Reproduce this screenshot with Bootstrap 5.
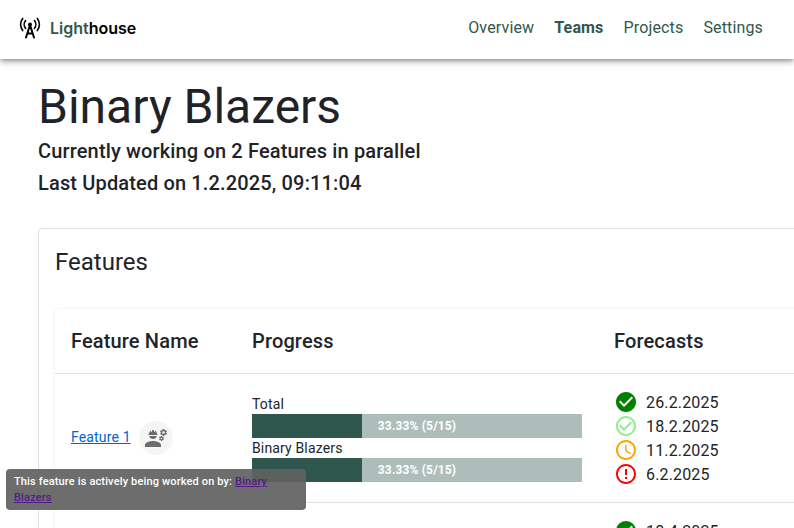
<!DOCTYPE html>
<html lang="en">
<head>
<meta charset="utf-8">
<title>Lighthouse</title>
<link href="https://cdn.jsdelivr.net/npm/bootstrap@5.3.0/dist/css/bootstrap.min.css" rel="stylesheet">
<style>
html, body { overflow: hidden; height: 100%; }
body { font-family: Roboto, sans-serif; color: #1f2328; background: #fff; position: relative; }
.lh-nav { height: 59px; padding: 0 31px 4px 19px; box-shadow: 0 2px 4px -1px rgba(0,0,0,.3), 0 4px 5px rgba(0,0,0,.14), 0 1px 10px rgba(0,0,0,.12); background: #fff; }
.lh-brand { font-family: Inter, sans-serif; font-weight: 600; font-size: 16px; color: #000; padding: 0; margin: 0; gap: 9px; }
.lh-brand:hover { color: #000; }
.lh-brand em { font-style: normal; color: #30574e; }
.lh-link { font-size: 16px; letter-spacing: .15px; color: #30574e; padding: 0 !important; margin-left: 20px; line-height: 24px; }
.lh-link.lh-active { font-weight: 700; color: #30574e; }
.lh-main { padding: 20px 0 0 38px; width: 1400px; }
.lh-title { font-size: 48px; font-weight: 400; line-height: 56px; margin: 0; }
.lh-sub { font-size: 20px; font-weight: 500; letter-spacing: .15px; line-height: 32px; margin: 0; }
.lh-card { margin-top: 29px; width: 1100px; border-color: #e0e0e0; border-radius: 4px; padding: 17px 16px 16px; }
.lh-card-title { font-size: 24px; font-weight: 400; line-height: 32px; margin: 0 0 31px; }
.lh-box { border-radius: 4px; box-shadow: 0 0 3px rgba(0,0,0,.1); }
.lh-table { table-layout: fixed; width: 100%; margin: 0; }
.lh-table th, .lh-table td { padding: 16px; border-bottom: 1px solid #e0e0e0; vertical-align: middle; }
.lh-table th { font-size: 20px; font-weight: 500; letter-spacing: .15px; line-height: 32px; }
.lh-c1 { width: 181px; }
.lh-c2 { width: 362px; }
.lh-flink { font-size: 14px; letter-spacing: .15px; color: #0066cc; margin-bottom: 2px; }
.lh-circle { width: 34px; height: 34px; background: #f5f5f5; border-radius: 50%; }
.lh-label { font-size: 14px; line-height: 20px; letter-spacing: .15px; }
.lh-label-low { margin-top: 4px; }
.lh-bar { height: 24px; width: 330px; background: #aebdb9; }
.lh-fill { width: 33.33%; background: #30574e; }
.lh-pct { font-size: 12px; font-weight: 700; letter-spacing: .15px; color: #fff; inset: 0; }
.lh-date { height: 24px; font-size: 16px; letter-spacing: .15px; line-height: 24px; gap: 8px; }
.lh-date span { padding-top: 1px; }
.lh-tip { left: 6px; top: 469px; width: 300px; height: 41px; padding: 5px 8px 3px; background: rgba(97,97,97,.92); border-radius: 4px; color: #fff; font-size: 11px; font-weight: 500; letter-spacing: .15px; line-height: 16px; }
.lh-tip a { color: #551a8b; }
</style>
</head>
<body>
<nav class="navbar lh-nav d-flex justify-content-between align-items-center flex-nowrap">
  <a class="navbar-brand lh-brand d-flex align-items-center" href="#">
    <svg width="22" height="22" viewBox="0 0 22 22" fill="none" stroke="#000" stroke-width="1.6" stroke-linecap="round">
      <circle cx="11" cy="7.5" r="2" fill="#000" stroke="none"/>
      <path d="M6.6 3.6a6 6 0 0 0 0 7.8M15.4 3.6a6 6 0 0 1 0 7.8"/>
      <path d="M3.7 1.4a10 10 0 0 0 0 12.2M18.3 1.4a10 10 0 0 1 0 12.2"/>
      <path d="M11 8l-4 12.5M11 8l4 12.5M8.3 16.5h5.4" stroke-width="2"/>
    </svg>
    <span><em>Light</em>house</span>
  </a>
  <div class="navbar-nav flex-row">
    <a class="nav-link lh-link" href="#">Overview</a>
    <a class="nav-link lh-link lh-active" href="#">Teams</a>
    <a class="nav-link lh-link" href="#">Projects</a>
    <a class="nav-link lh-link" href="#">Settings</a>
  </div>
</nav>
<main class="lh-main">
  <h1 class="lh-title">Binary Blazers</h1>
  <h6 class="lh-sub">Currently working on 2 Features in parallel</h6>
  <h6 class="lh-sub">Last Updated on 1.2.2025, 09:11:04</h6>
  <div class="card lh-card">
    <h5 class="lh-card-title">Features</h5>
    <div class="lh-box">
      <table class="table lh-table">
        <thead>
          <tr><th class="lh-c1">Feature Name</th><th class="lh-c2">Progress</th><th>Forecasts</th></tr>
        </thead>
        <tbody>
          <tr>
            <td>
              <div class="d-flex align-items-center gap-2">
                <a class="lh-flink" href="#">Feature 1</a>
                <span class="lh-circle d-flex align-items-center justify-content-center">
                  <svg width="24" height="24" viewBox="0 0 24 24" fill="#6b6b6b"><path d="M9 15c-2.67 0-8 1.34-8 4v2h16v-2c0-2.66-5.33-4-8-4zm13.1-8.16c.01-.11.02-.22.02-.34 0-.12-.01-.23-.03-.34l.74-.58c.07-.05.08-.15.04-.22l-.7-1.21c-.04-.08-.14-.1-.21-.08l-.86.35c-.18-.14-.38-.25-.59-.34l-.13-.93c-.01-.08-.08-.14-.16-.14h-1.4c-.08 0-.15.06-.17.14l-.13.93c-.21.09-.41.21-.59.34l-.87-.35c-.08-.03-.17 0-.21.08l-.7 1.21c-.04.08-.03.17.04.22l.74.58c-.02.11-.03.23-.03.34 0 .11.01.23.03.34l-.74.58c-.07.05-.08.15-.04.22l.7 1.21c.04.08.14.1.21.08l.87-.35c.18.14.38.25.59.34l.13.93c.01.08.08.14.17.14h1.4c.08 0 .15-.06.17-.14l.13-.93c.21-.09.41-.21.59-.34l.87.35c.08.03.17 0 .21-.08l.7-1.21c.04-.08.03-.17-.04-.22l-.73-.58zm-2.6.91c-.69 0-1.25-.56-1.25-1.25s.56-1.25 1.25-1.25 1.25.56 1.25 1.25-.56 1.25-1.25 1.25zm.42 3.93-.5-.87c-.03-.06-.1-.08-.15-.06l-.62.25c-.13-.1-.27-.18-.42-.24l-.09-.66c-.02-.06-.08-.1-.14-.1h-1c-.06 0-.11.04-.12.11l-.09.66c-.15.06-.29.15-.42.24l-.62-.25c-.06-.02-.12 0-.15.06l-.5.87c-.03.06-.02.12.03.16l.53.41c-.01.08-.02.16-.02.24 0 .08.01.17.02.24l-.53.41c-.05.04-.06.11-.03.16l.5.87c.03.06.1.08.15.06l.62-.25c.13.1.27.18.42.24l.09.66c.01.07.06.11.12.11h1c.06 0 .12-.04.12-.11l.09-.66c.15-.06.29-.15.42-.24l.62.25c.06.02.12 0 .15-.06l.5-.87c.03-.06.02-.12-.03-.16l-.52-.41c.01-.08.02-.16.02-.24 0-.08-.01-.17-.02-.24l.53-.41c.05-.04.06-.11.03-.17zm-2.42 1.65c-.46 0-.83-.38-.83-.83 0-.46.38-.83.83-.83s.83.38.83.83c0 .46-.37.83-.83.83zM4.74 9h8.53c.27 0 .49-.22.49-.49v-.02c0-.27-.22-.49-.49-.49H13c0-1.48-.81-2.75-2-3.45v.95c0 .28-.22.5-.5.5s-.5-.22-.5-.5V4.14C9.68 4.06 9.35 4 9 4s-.68.06-1 .14V5.5c0 .28-.22.5-.5.5S7 5.78 7 5.5v-.95C5.81 5.25 5 6.52 5 8h-.26c-.27 0-.49.22-.49.49v.03c0 .26.22.48.49.48zM9 13c1.86 0 3.41-1.28 3.86-3H5.14c.45 1.72 2 3 3.86 3z"/></svg>
                </span>
              </div>
            </td>
            <td>
              <div class="lh-label">Total</div>
              <div class="lh-bar d-flex position-relative"><div class="lh-fill"></div><div class="lh-pct position-absolute d-flex align-items-center justify-content-center">33.33% (5/15)</div></div>
              <div class="lh-label">Binary Blazers</div>
              <div class="lh-bar d-flex position-relative"><div class="lh-fill"></div><div class="lh-pct position-absolute d-flex align-items-center justify-content-center">33.33% (5/15)</div></div>
            </td>
            <td>
              <div class="lh-date d-flex align-items-center"><svg width="24" height="24" viewBox="0 0 24 24" fill="#008000"><path d="M12 2C6.48 2 2 6.48 2 12s4.48 10 10 10 10-4.48 10-10S17.52 2 12 2zm-2 15l-5-5 1.41-1.41L10 14.17l7.59-7.59L19 8l-9 9z"/></svg><span>26.2.2025</span></div>
              <div class="lh-date d-flex align-items-center"><svg width="24" height="24" viewBox="0 0 24 24" fill="#90ee90"><path d="M16.59 7.58 10 14.17l-3.59-3.58L5 12l5 5 8-8zM12 2C6.48 2 2 6.48 2 12s4.48 10 10 10 10-4.48 10-10S17.52 2 12 2zm0 18c-4.42 0-8-3.58-8-8s3.58-8 8-8 8 3.58 8 8-3.58 8-8 8z"/></svg><span>18.2.2025</span></div>
              <div class="lh-date d-flex align-items-center"><svg width="24" height="24" viewBox="0 0 24 24" fill="#ffa500"><path d="M11.99 2C6.47 2 2 6.48 2 12s4.47 10 9.99 10C17.52 22 22 17.52 22 12S17.52 2 11.99 2zM12 20c-4.42 0-8-3.58-8-8s3.58-8 8-8 8 3.58 8 8-3.58 8-8 8z"/><path d="M12.5 7H11v6l5.25 3.15.75-1.23-4.5-2.67z"/></svg><span>11.2.2025</span></div>
              <div class="lh-date d-flex align-items-center"><svg width="24" height="24" viewBox="0 0 24 24" fill="#ff0000"><path d="M11 15h2v2h-2zm0-8h2v6h-2zm.99-5C6.47 2 2 6.48 2 12s4.47 10 9.99 10C17.52 22 22 17.52 22 12S17.52 2 11.99 2zM12 20c-4.42 0-8-3.58-8-8s3.58-8 8-8 8 3.58 8 8-3.58 8-8 8z"/></svg><span>6.2.2025</span></div>
            </td>
          </tr>
          <tr>
            <td><a class="lh-flink" href="#">Feature 2</a></td>
            <td>
              <div class="lh-label lh-label-low">Total</div>
              <div class="lh-bar d-flex position-relative"><div class="lh-fill"></div></div>
              <div class="lh-label">Binary Blazers</div>
              <div class="lh-bar d-flex position-relative"><div class="lh-fill"></div></div>
            </td>
            <td>
              <div class="lh-date d-flex align-items-center"><svg width="24" height="24" viewBox="0 0 24 24" fill="#008000"><path d="M12 2C6.48 2 2 6.48 2 12s4.48 10 10 10 10-4.48 10-10S17.52 2 12 2zm-2 15l-5-5 1.41-1.41L10 14.17l7.59-7.59L19 8l-9 9z"/></svg><span>18.4.2025</span></div>
              <div class="lh-date d-flex align-items-center"></div>
              <div class="lh-date d-flex align-items-center"></div>
              <div class="lh-date d-flex align-items-center"></div>
            </td>
          </tr>
        </tbody>
      </table>
    </div>
  </div>
</main>
<div class="lh-tip position-absolute">This feature is actively being worked on by: <a href="#">Binary Blazers</a></div>
</body>
</html>
